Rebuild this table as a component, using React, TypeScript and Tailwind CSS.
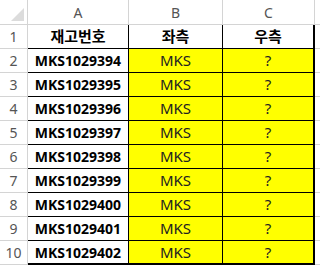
import React from "react";

const ids = [
  "MKS1029394",
  "MKS1029395",
  "MKS1029396",
  "MKS1029397",
  "MKS1029398",
  "MKS1029399",
  "MKS1029400",
  "MKS1029401",
  "MKS1029402",
];

const font = { fontFamily: '"Noto Sans", "Noto Sans CJK KR", sans-serif' };

export default function App() {
  return (
    <div className="w-[320px] h-[268px] bg-white overflow-hidden text-black" style={font}>
      {/* column header row */}
      <div className="flex h-[25px]">
        <div className="w-[28px] shrink-0 border-r border-b border-[#d4d4d4] relative bg-white">
          <svg className="absolute right-[3px] bottom-[3px]" width="13" height="13" viewBox="0 0 13 13">
            <polygon points="13,0 13,13 0,13" fill="#dcdcdc" />
          </svg>
        </div>
        <div className="w-[101px] shrink-0 border-r border-b border-[#d4d4d4] flex items-center justify-center text-[14px] text-[#555]">A</div>
        <div className="w-[94px] shrink-0 border-r border-b border-[#d4d4d4] flex items-center justify-center text-[14px] text-[#555]">B</div>
        <div className="w-[92px] shrink-0 border-r border-b border-[#d4d4d4] flex items-center justify-center text-[14px] text-[#555]">C</div>
        <div className="flex-1 border-b border-[#d4d4d4]" />
      </div>
      {/* row 1 */}
      <div className="flex h-[24px]">
        <div className="w-[28px] shrink-0 border-r border-b border-[#d4d4d4] flex items-center justify-center text-[14px] text-[#555]">1</div>
        <div className="w-[101px] shrink-0 border-r border-b border-black flex items-center justify-center text-[15px] font-bold">재고번호</div>
        <div className="w-[94px] shrink-0 border-r border-b border-black flex items-center justify-center text-[15px] font-bold">좌측</div>
        <div className="w-[92px] shrink-0 border-r-2 border-b border-black flex items-center justify-center text-[15px] font-bold">우측</div>
        <div className="flex-1 border-b border-[#d4d4d4]" />
      </div>
      {ids.map((id, i) => {
        const last = i === ids.length - 1;
        return (
          <div key={id} className="flex h-[24px]">
            <div className="w-[28px] shrink-0 border-r border-b border-[#d4d4d4] flex items-center justify-center text-[14px] text-[#555]">
              {i + 2}
            </div>
            <div
              className={
                last
                  ? "w-[101px] shrink-0 border-r border-b-2 border-black flex items-center justify-center text-[14px] font-bold"
                  : "w-[101px] shrink-0 border-r border-b border-black flex items-center justify-center text-[14px] font-bold"
              }
            >
              {id}
            </div>
            <div
              className={
                last
                  ? "w-[94px] shrink-0 border-r border-b-2 border-black bg-[#ffff00] flex items-center justify-center text-[15px] text-[#222]"
                  : "w-[94px] shrink-0 border-r border-b border-black bg-[#ffff00] flex items-center justify-center text-[15px] text-[#222]"
              }
            >
              MKS
            </div>
            <div
              className={
                last
                  ? "w-[92px] shrink-0 border-r-2 border-b-2 border-black bg-[#ffff00] flex items-center justify-center text-[15px] text-[#222]"
                  : "w-[92px] shrink-0 border-r-2 border-b border-black bg-[#ffff00] flex items-center justify-center text-[15px] text-[#222]"
              }
            >
              ?
            </div>
            <div className="flex-1 border-b border-[#d4d4d4]" />
          </div>
        );
      })}
    </div>
  );
}
